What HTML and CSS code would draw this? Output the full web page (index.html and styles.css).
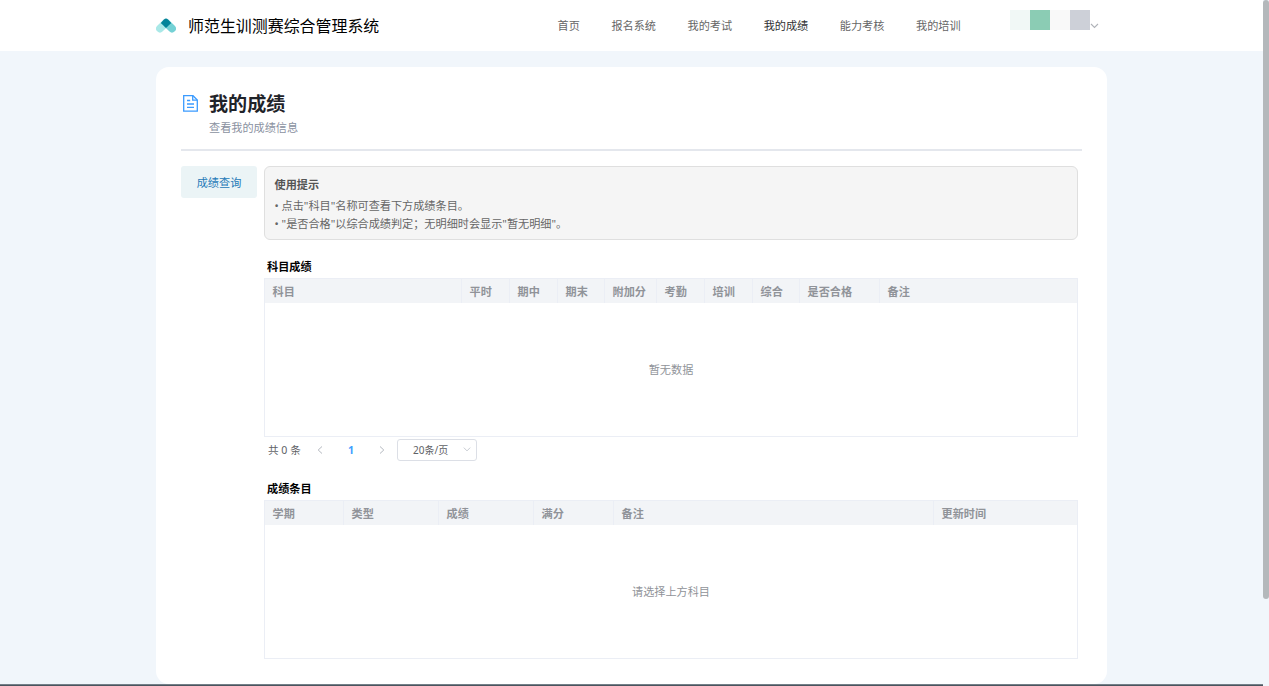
FILE: index.html
```
<!DOCTYPE html>
<html lang="zh-CN">
<head>
    <meta charset="UTF-8">
    <meta name="viewport" content="width=device-width, initial-scale=1.0">
    <title>师范生训测赛综合管理系统</title>
    <link rel="stylesheet" href="styles.css">
</head>
<body>
    <div class="header">
        <div class="header-inner">
            <svg class="logo" width="20" height="15" viewBox="0 0 20 15">
                <path d="M4 10.6 L8.4 6.2" fill="none" stroke="#a9e8e7" stroke-width="7.8" stroke-linecap="round"/>
                <path d="M16 10.6 L11.6 6.2" fill="none" stroke="#74d1d5" stroke-width="7.8" stroke-linecap="round"/>
                <path d="M4.8 5 L7.9 1.5 Q10 -0.3 12.1 1.5 L15.2 5 L10 10 Z" fill="#028499"/>
            </svg>
            <div class="site-title">师范生训测赛综合管理系统</div>
            <div class="nav">
                <a href="#">首页</a>
                <a href="#">报名系统</a>
                <a href="#">我的考试</a>
                <a href="#" class="active">我的成绩</a>
                <a href="#">能力考核</a>
                <a href="#">我的培训</a>
            </div>
            <div class="user">
                <div class="avatar">
                    <span class="block mint"></span>
                    <span class="block green"></span>
                    <span class="block light"></span>
                    <span class="block gray"></span>
                </div>
                <svg class="user-arrow" width="9" height="6" viewBox="0 0 9 6"><path d="M1 1 L4.5 4.4 L8 1" fill="none" stroke="#b0b3b9" stroke-width="1.1"/></svg>
            </div>
        </div>
    </div>

    <div class="page">
        <div class="page-head">
            <svg class="page-icon" width="15" height="17" viewBox="0 0 15 17" fill="none" stroke="#3b9bff" stroke-width="1.3">
                <path d="M0.7 0.7 H10 L14.3 5 V16.2 H0.7 Z"/>
                <path d="M9.7 0.9 V5.2 H14.1"/>
                <path d="M4 5.5 H7.2 M4 9 H11 M4 12.4 H11"/>
            </svg>
            <div>
                <h1>我的成绩</h1>
                <p>查看我的成绩信息</p>
            </div>
        </div>

        <div class="page-body">
            <div class="side-menu">
                <a href="#">成绩查询</a>
            </div>

            <div class="main-content">
                <div class="tips">
                    <div class="tips-title">使用提示</div>
                    <div>• 点击"科目"名称可查看下方成绩条目。</div>
                    <div>• "是否合格"以综合成绩判定；无明细时会显示"暂无明细"。</div>
                </div>

                <h2>科目成绩</h2>
                <div class="table-box">
                    <table>
                        <colgroup>
                            <col class="w197"><col class="w48"><col class="w48"><col class="w47"><col class="w52">
                            <col class="w48"><col class="w48"><col class="w47"><col class="w80"><col>
                        </colgroup>
                        <thead>
                            <tr>
                                <th>科目</th>
                                <th>平时</th>
                                <th>期中</th>
                                <th>期末</th>
                                <th>附加分</th>
                                <th>考勤</th>
                                <th>培训</th>
                                <th>综合</th>
                                <th>是否合格</th>
                                <th>备注</th>
                            </tr>
                        </thead>
                    </table>
                    <div class="empty">暂无数据</div>
                </div>

                <div class="pagination">
                    <span class="total">共 0 条</span>
                    <svg class="prev" width="6" height="8" viewBox="0 0 6 8"><path d="M5 0.5 L1.2 4 L5 7.5" fill="none" stroke="#b4b8bf"/></svg>
                    <span class="current">1</span>
                    <svg class="next" width="6" height="8" viewBox="0 0 6 8"><path d="M1 0.5 L4.8 4 L1 7.5" fill="none" stroke="#b4b8bf"/></svg>
                    <div class="page-size">
                        <span>20条/页</span>
                        <svg width="8" height="5" viewBox="0 0 8 5"><path d="M0.8 0.6 L4 3.9 L7.2 0.6" fill="none" stroke="#c8ccd3"/></svg>
                    </div>
                </div>

                <h2>成绩条目</h2>
                <div class="table-box">
                    <table>
                        <colgroup>
                            <col class="w79"><col class="w95"><col class="w95"><col class="w80"><col class="w320"><col>
                        </colgroup>
                        <thead>
                            <tr>
                                <th>学期</th>
                                <th>类型</th>
                                <th>成绩</th>
                                <th>满分</th>
                                <th>备注</th>
                                <th>更新时间</th>
                            </tr>
                        </thead>
                    </table>
                    <div class="empty">请选择上方科目</div>
                </div>
            </div>
        </div>
    </div>

    <div class="footer"></div>
    <div class="scroll-thumb"></div>
</body>
</html>
```

FILE: styles.css
```
* {
    box-sizing: border-box;
}

body {
    font-family: "Noto Sans", "Noto Sans CJK SC", sans-serif;
    font-size: 11.15px;
    margin: 0;
    padding-right: 6px;
    height: 686px;
    overflow: hidden;
    display: flex;
    flex-direction: column;
    background-color: #f1f6fb;
}

a {
    text-decoration: none;
}

svg {
    display: block;
    flex-shrink: 0;
}

.header {
    height: 51px;
    background-color: #fff;
}

.header-inner {
    width: 951px;
    height: 51px;
    margin: 0 auto;
    display: flex;
    align-items: center;
}

.site-title {
    width: 194px;
    margin-left: 12px;
    padding-top: 1px;
    font-size: 15.95px;
    line-height: 24px;
    white-space: nowrap;
    color: #000;
}

.nav {
    display: flex;
    gap: 31.6px;
    margin-left: 175.5px;
    padding-top: 1px;
    line-height: 18px;
}

.nav a {
    color: #666;
    white-space: nowrap;
}

.nav a.active {
    color: #303133;
}

.user {
    display: flex;
    margin-left: auto;
    margin-right: 8px;
    height: 31px;
    align-self: flex-start;
    padding-top: 10px;
}

.avatar {
    display: flex;
}

.block {
    width: 20px;
    height: 20px;
}

.mint {
    background-color: #f1f8f6;
}

.green {
    background-color: #8bccb4;
}

.light {
    background-color: #f9f9f9;
}

.gray {
    background-color: #cdd0d8;
}

.user-arrow {
    margin-top: 13px;
}

.page {
    width: 951px;
    height: 617px;
    margin: 16px auto 0;
    padding: 24px 25px 0;
    border-radius: 13px;
    background-color: #fff;
}

.page-head {
    height: 60px;
    display: flex;
    gap: 11px;
    padding-left: 2px;
    border-bottom: 2px solid #e4e7ed;
}

.page-icon {
    margin-top: 4px;
}

h1 {
    margin: 0;
    font-size: 19.1px;
    line-height: 27px;
    color: #1f2329;
}

.page-head p {
    margin: 0;
    line-height: 20px;
    color: #8a919f;
}

.page-body {
    display: flex;
    gap: 7px;
    padding-top: 15px;
}

.side-menu {
    width: 76px;
}

.side-menu a {
    display: block;
    height: 32px;
    line-height: 34px;
    text-align: center;
    border-radius: 3px;
    color: #1f7ab8;
    background-color: #ebf4f6;
}

.main-content {
    width: 814px;
}

.tips {
    height: 74px;
    padding: 9px 9.5px 0;
    border: 1px solid #dfdfdf;
    border-radius: 6px;
    line-height: 18px;
    color: #666;
    background-color: #f5f5f5;
}

.tips-title {
    margin-bottom: 3px;
    font-weight: bold;
    color: #555;
}

h2 {
    margin: 18px 0 2px 3px;
    font-size: 11.15px;
    line-height: 18px;
    color: #000;
}

.table-box {
    height: 159px;
    border: 1px solid #ebeef5;
    display: flex;
    flex-direction: column;
}

table {
    width: 100%;
    table-layout: fixed;
    border-spacing: 0;
}

th {
    height: 24px;
    padding: 2px 0 0 7.6px;
    border-right: 1px solid #ebeef5;
    line-height: 18px;
    text-align: left;
    white-space: nowrap;
    color: #909399;
    background-color: #f2f4f7;
}

th:last-child {
    border-right: none;
}

.w47 { width: 47px; }
.w48 { width: 48px; }
.w52 { width: 52px; }
.w79 { width: 79px; }
.w80 { width: 80px; }
.w95 { width: 95px; }
.w197 { width: 197px; }
.w320 { width: 320px; }

.empty {
    flex: 1;
    display: flex;
    align-items: center;
    justify-content: center;
    padding-bottom: 1px;
    color: #909399;
}

.pagination {
    height: 25px;
    display: flex;
    align-items: center;
    padding: 0 0 0 4px;
    font-size: 10.6px;
    color: #606266;
}

.total {
    width: 49px;
}

.current {
    width: 56px;
    text-align: center;
    font-weight: bold;
    color: #409eff;
}

.page-size {
    width: 80px;
    height: 22px;
    margin-left: 12px;
    padding: 0 5px 0 15px;
    display: flex;
    align-items: center;
    justify-content: space-between;
    border: 1px solid #dcdfe6;
    border-radius: 3px;
    font-size: 10px;
}

.footer {
    height: 2px;
    border-top: 1px solid #747f88;
    background-color: #4b555e;
}

/* 滚动条 */
.scroll-thumb {
    position: fixed;
    top: 0;
    right: 0;
    width: 6px;
    height: 599px;
    border-radius: 3px;
    background-color: #b4b8bb;
}
```
